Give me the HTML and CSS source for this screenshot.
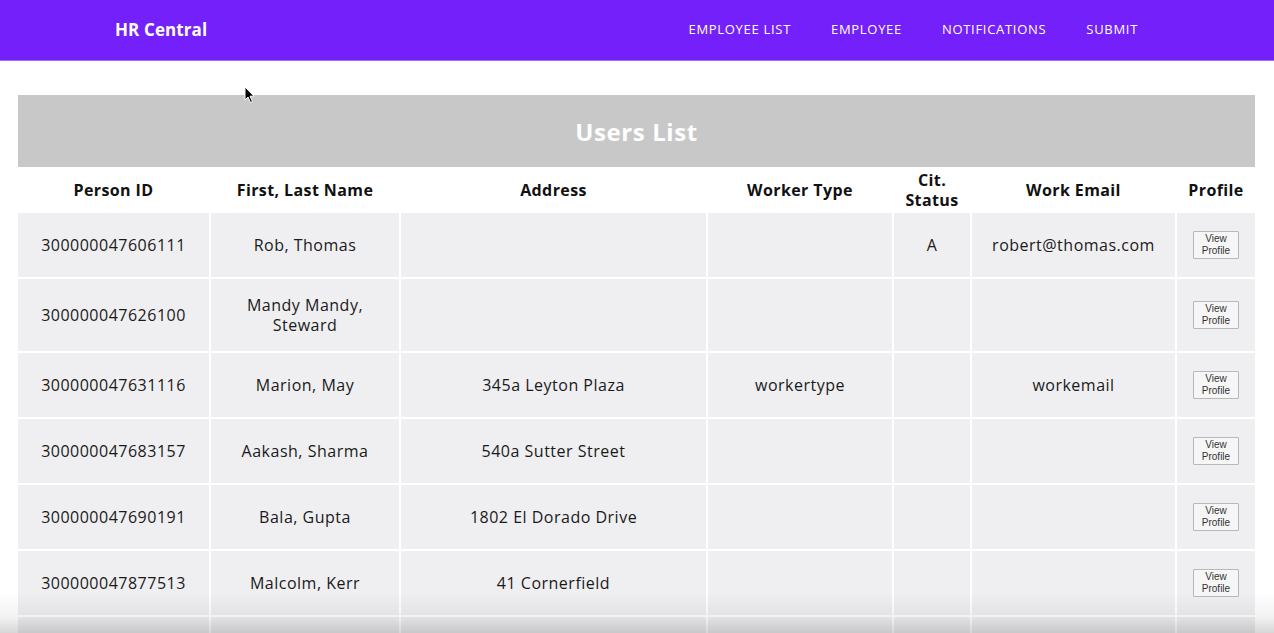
FILE: index.html
```html
<!DOCTYPE html>
<html lang="en">
<head>
<meta charset="utf-8">
<title>HR Central</title>
<link rel="stylesheet" href="styles.css">
</head>
<body>
<header class="navbar">
  <div class="brand">HR Central</div>
  <nav class="nav-links">
    <a href="#">EMPLOYEE LIST</a>
    <a href="#">EMPLOYEE</a>
    <a href="#">NOTIFICATIONS</a>
    <a href="#">SUBMIT</a>
  </nav>
</header>
<main class="content">
  <div class="title-bar">Users List</div>
  <table class="users">
    <colgroup>
      <col class="c1"><col class="c2"><col class="c3"><col class="c4"><col class="c5"><col class="c6"><col class="c7">
    </colgroup>
    <thead>
      <tr>
        <th>Person ID</th>
        <th>First, Last Name</th>
        <th>Address</th>
        <th>Worker Type</th>
        <th>Cit.<br>Status</th>
        <th>Work Email</th>
        <th>Profile</th>
      </tr>
    </thead>
    <tbody>
      <tr><td>300000047606111</td><td>Rob, Thomas</td><td></td><td></td><td>A</td><td>robert@thomas.com</td><td><button class="view-btn">View<br>Profile</button></td></tr>
      <tr class="tall"><td>300000047626100</td><td>Mandy Mandy,<br>Steward</td><td></td><td></td><td></td><td></td><td><button class="view-btn">View<br>Profile</button></td></tr>
      <tr><td>300000047631116</td><td>Marion, May</td><td>345a Leyton Plaza</td><td>workertype</td><td></td><td>workemail</td><td><button class="view-btn">View<br>Profile</button></td></tr>
      <tr><td>300000047683157</td><td>Aakash, Sharma</td><td>540a Sutter Street</td><td></td><td></td><td></td><td><button class="view-btn">View<br>Profile</button></td></tr>
      <tr><td>300000047690191</td><td>Bala, Gupta</td><td>1802 El Dorado Drive</td><td></td><td></td><td></td><td><button class="view-btn">View<br>Profile</button></td></tr>
      <tr><td>300000047877513</td><td>Malcolm, Kerr</td><td>41 Cornerfield</td><td></td><td></td><td></td><td><button class="view-btn">View<br>Profile</button></td></tr>
      <tr><td></td><td></td><td></td><td></td><td></td><td></td><td></td></tr>
    </tbody>
  </table>
</main>
<svg class="cursor" width="12" height="18" viewBox="0 0 12 18"><path d="M1 1 L1 14 L4 11 L6.5 16.5 L8.5 15.5 L6 10.2 L10 10.2 Z" fill="#000" stroke="#fff" stroke-width="1"/></svg>
<div class="fade"></div>
</body>
</html>
```
FILE: styles.css
```css
* { box-sizing: border-box; }
html, body { margin: 0; padding: 0; }
body {
  font-family: "Open Sans", "Noto Sans", sans-serif;
  color: #111;
  background: #fff;
  overflow: hidden;
  height: 633px;
}
.navbar {
  height: 61px;
  background: #7420fa;
  border-bottom: 1px solid #a56ff2;
  display: flex;
  align-items: center;
  padding: 0 0 2px 115px;
}
.brand {
  color: #fff;
  font-weight: 700;
  font-size: 17px;
  letter-spacing: 0.1px;
}
.nav-links {
  margin-left: auto;
  display: flex;
  gap: 40px;
  margin-right: 136px;
}
.nav-links a {
  color: #fff;
  text-decoration: none;
  font-size: 13px;
  letter-spacing: 0.7px;
}
.content {
  padding: 34px 19px 0 18px;
}
.title-bar {
  height: 72px;
  background: #c8c8c8;
  color: #fff;
  font-weight: 700;
  font-size: 24px;
  letter-spacing: 0.6px;
  display: flex;
  align-items: center;
  justify-content: center;
}
.users {
  width: calc(100% + 4px);
  margin: -2px -2px 0;
  border-collapse: separate;
  border-spacing: 2px;
  table-layout: fixed;
}
.c1 { width: 191px; }
.c2 { width: 188px; }
.c3 { width: 305px; }
.c4 { width: 184px; }
.c5 { width: 76px; }
.c6 { width: 203px; }
.c7 { width: 78px; }
.users th {
  font-size: 16px;
  font-weight: 700;
  letter-spacing: 0.4px;
  line-height: 20px;
  padding: 2px 2px 1px;
  height: 44px;
  color: #111;
  vertical-align: middle;
}
.users td {
  background: #efeff1;
  text-align: center;
  vertical-align: middle;
  font-size: 16px;
  letter-spacing: 0.5px;
  line-height: 20px;
  padding: 18px 4px;
  height: 63px;
  color: #1a1a1a;
}
.users tr.tall td { height: 72px; padding: 16px 4px; }
.view-btn {
  font-family: "Liberation Sans", Arial, sans-serif;
  font-size: 10px;
  line-height: 12px;
  letter-spacing: 0;
  color: #333;
  background: #f6f6f6;
  border: 1px solid #b8b8b8;
  border-radius: 1px;
  width: 46px;
  height: 28px;
  padding: 0;
  display: inline-block;
  vertical-align: middle;
}
.cursor {
  position: absolute;
  left: 244px;
  top: 86px;
}
.fade {
  position: fixed;
  left: 0;
  right: 0;
  bottom: 0;
  height: 40px;
  background: linear-gradient(to bottom, rgba(0,0,0,0) 0%, rgba(0,0,0,0.05) 60%, rgba(0,0,0,0.16) 100%);
  pointer-events: none;
}
```
